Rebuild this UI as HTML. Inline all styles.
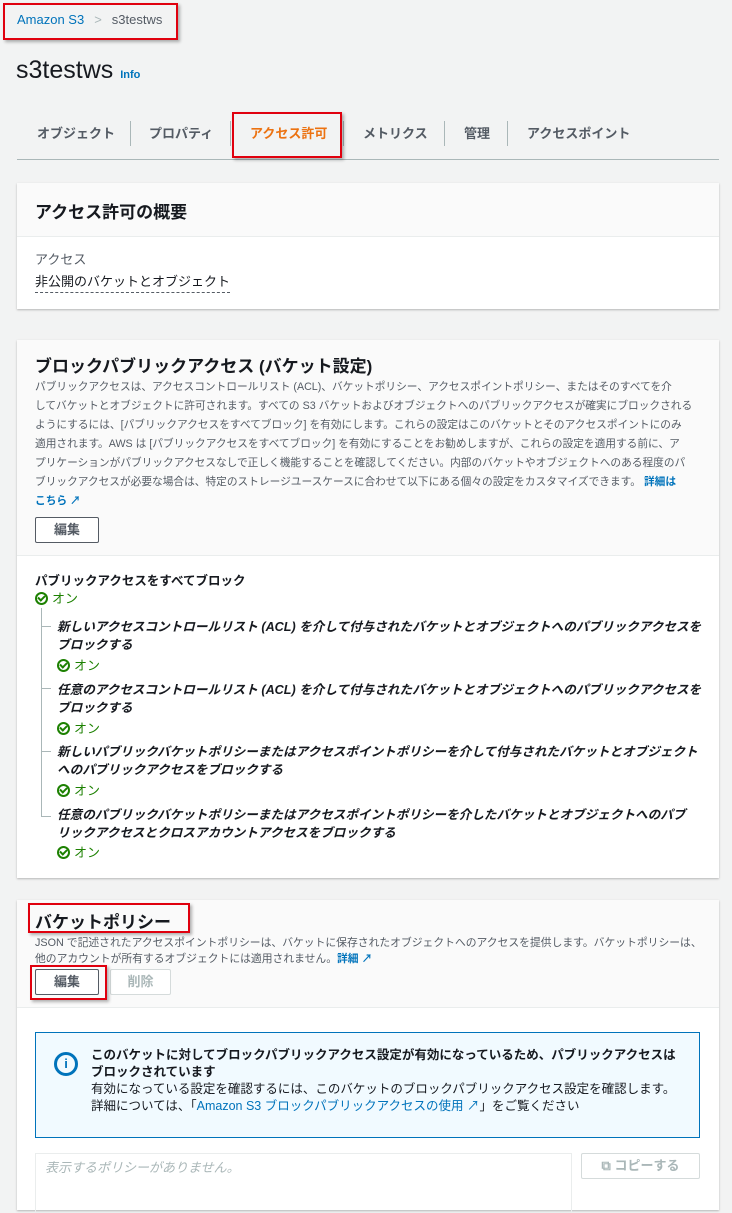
<!DOCTYPE html>
<html><head><meta charset="utf-8"><style>
*{box-sizing:border-box;margin:0;padding:0}
body{width:732px;height:1202px;overflow:hidden;background:#f2f3f3;font-family:"Liberation Sans","Noto Sans CJK JP",sans-serif;color:#16191f;position:relative;font-size:13px}
.a{position:absolute;white-space:nowrap}
.red{position:absolute;border:2px solid #e0000e;box-shadow:2px 2px 3px rgba(0,0,0,.3)}
.card{position:absolute;left:17px;width:702px;background:#fff;box-shadow:0 1px 2px rgba(0,0,0,.25)}
.hd{background:#fafafa;border-bottom:1px solid #eaeded}
.link{color:#0073bb}
.btn{position:absolute;border:1px solid #545b64;border-radius:2px;background:#fff;font-weight:bold;font-size:13px;text-align:center;color:#545b64}
.ok{color:#1d8102}
.ck{display:inline-block;width:13px;height:13px;border:2px solid #1d8102;border-radius:50%;vertical-align:-2px;margin-right:4px;position:relative}
.ck:after{content:"";position:absolute;left:2px;top:0px;width:3px;height:5px;border:solid #1d8102;border-width:0 2px 2px 0;transform:rotate(45deg)}
.it{font-weight:bold;font-style:italic;font-size:12.6px;line-height:18px}
.tab{position:absolute;top:123px;font-weight:bold;font-size:13px;color:#545b64}
.sep{position:absolute;top:121px;width:1px;height:25px;background:#aab7b8}
.desc{font-size:10.7px;line-height:19px;color:#545b64}
</style></head><body>
<div class="a" style="left:17px;top:12px;font-size:13px"><span class="link">Amazon S3</span><span style="color:#aab7b8;margin:0 10px">&gt;</span><span style="color:#545b64">s3testws</span></div>
<div class="red" style="left:3px;top:3px;width:175px;height:37px"></div>
<div class="a" style="left:16px;top:56px;font-size:25px">s3testws <span class="link" style="font-size:11px;font-weight:bold">Info</span></div>
<div class="tab" style="left:37px">オブジェクト</div>
<div class="sep" style="left:130px"></div>
<div class="tab" style="left:149px">プロパティ</div>
<div class="sep" style="left:230px"></div>
<div class="tab" style="left:250px;color:#ec7211">アクセス許可</div>
<div class="sep" style="left:343px"></div>
<div class="tab" style="left:363px">メトリクス</div>
<div class="sep" style="left:444px"></div>
<div class="tab" style="left:464px">管理</div>
<div class="sep" style="left:507px"></div>
<div class="tab" style="left:527px">アクセスポイント</div>
<div class="a" style="left:17px;top:159px;width:702px;height:1px;background:#aab7b8"></div>
<div class="red" style="left:232px;top:112px;width:110px;height:46px"></div>

<div class="card" style="top:183px;height:126px">
<div class="hd" style="height:54px;padding:15px 18px;font-size:17px;font-weight:bold">アクセス許可の概要</div>
<div class="a" style="left:18px;top:66px;color:#545b64">アクセス</div>
<div class="a" style="left:18px;top:88px;border-bottom:1px dashed #545b64;padding-bottom:2px">非公開のバケットとオブジェクト</div>
</div>

<div class="card" style="top:340px;height:538px">
<div class="hd" style="height:216px;padding:16px 18px">
<div style="font-size:17px;font-weight:bold;line-height:22px">ブロックパブリックアクセス (バケット設定)</div>
<div class="desc" style="white-space:nowrap">パブリックアクセスは、アクセスコントロールリスト (ACL)、バケットポリシー、アクセスポイントポリシー、またはそのすべてを介<br>してバケットとオブジェクトに許可されます。すべての S3 バケットおよびオブジェクトへのパブリックアクセスが確実にブロックされる<br>ようにするには、[パブリックアクセスをすべてブロック] を有効にします。これらの設定はこのバケットとそのアクセスポイントにのみ<br>適用されます。AWS は [パブリックアクセスをすべてブロック] を有効にすることをお勧めしますが、これらの設定を適用する前に、ア<br>プリケーションがパブリックアクセスなしで正しく機能することを確認してください。内部のバケットやオブジェクトへのある程度のパ<br>ブリックアクセスが必要な場合は、特定のストレージユースケースに合わせて以下にある個々の設定をカスタマイズできます。 <b class="link">詳細は</b><br><b class="link">こちら ↗</b></div>
</div>
<div class="btn" style="left:18px;top:177px;width:64px;height:26px;line-height:24px">編集</div>
<div class="a" style="left:18px;top:230px;font-weight:bold;font-size:12.5px">パブリックアクセスをすべてブロック</div>
<div class="a ok" style="left:18px;top:248px"><span class="ck"></span>オン</div>
<div class="a" style="left:24px;top:268px;width:1px;height:208px;background:#aab7b8"></div>
<div class="a" style="left:24px;top:286px;width:10px;height:1px;background:#aab7b8"></div>
<div class="a" style="left:24px;top:348px;width:10px;height:1px;background:#aab7b8"></div>
<div class="a" style="left:24px;top:411px;width:10px;height:1px;background:#aab7b8"></div>
<div class="a" style="left:24px;top:476px;width:10px;height:1px;background:#aab7b8"></div>
<div class="a it" style="left:40px;top:278px">新しいアクセスコントロールリスト (ACL) を介して付与されたバケットとオブジェクトへのパブリックアクセスを<br>ブロックする</div>
<div class="a ok" style="left:40px;top:315px"><span class="ck"></span>オン</div>
<div class="a it" style="left:40px;top:341px">任意のアクセスコントロールリスト (ACL) を介して付与されたバケットとオブジェクトへのパブリックアクセスを<br>ブロックする</div>
<div class="a ok" style="left:40px;top:378px"><span class="ck"></span>オン</div>
<div class="a it" style="left:40px;top:403px">新しいパブリックバケットポリシーまたはアクセスポイントポリシーを介して付与されたバケットとオブジェクト<br>へのパブリックアクセスをブロックする</div>
<div class="a ok" style="left:40px;top:440px"><span class="ck"></span>オン</div>
<div class="a it" style="left:40px;top:466px">任意のパブリックバケットポリシーまたはアクセスポイントポリシーを介したバケットとオブジェクトへのパブ<br>リックアクセスとクロスアカウントアクセスをブロックする</div>
<div class="a ok" style="left:40px;top:502px"><span class="ck"></span>オン</div>
</div>

<div class="card" style="top:900px;height:310px">
<div class="hd" style="height:108px"></div>
<div class="a" style="left:18px;top:8px;font-size:17px;font-weight:bold">バケットポリシー</div>
<div class="a desc" style="left:18px;top:35px;line-height:16px;font-size:10.8px">JSON で記述されたアクセスポイントポリシーは、バケットに保存されたオブジェクトへのアクセスを提供します。バケットポリシーは、<br>他のアカウントが所有するオブジェクトには適用されません。<b class="link">詳細 ↗</b></div>
<div class="btn" style="left:18px;top:69px;width:64px;height:26px;line-height:24px">編集</div>
<div class="btn" style="left:93px;top:69px;width:61px;height:26px;line-height:24px;color:#aab7b8;border-color:#d5dbdb">削除</div>
<div class="a" style="left:18px;top:132px;width:665px;height:106px;border:1px solid #0073bb;background:#f1faff"></div>
<div class="a" style="left:37px;top:152px;width:24px;height:24px;border:3px solid #0073bb;border-radius:50%;color:#0073bb;font-weight:bold;font-size:13px;text-align:center;line-height:18px">i</div>
<div class="a" style="left:74px;top:147px;line-height:17px;font-size:12.5px"><b>このバケットに対してブロックパブリックアクセス設定が有効になっているため、パブリックアクセスは<br>ブロックされています</b><br>有効になっている設定を確認するには、このバケットのブロックパブリックアクセス設定を確認します。<br>詳細については、「<span class="link">Amazon S3 ブロックパブリックアクセスの使用 ↗</span>」をご覧ください</div>
<div class="a" style="left:18px;top:253px;width:537px;height:60px;border:1px solid #eaeded"></div>
<div class="a" style="left:28px;top:257px;font-style:italic;color:#aab7b8">表示するポリシーがありません。</div>
<div class="btn" style="left:564px;top:253px;width:119px;height:26px;line-height:24px;color:#aab7b8;border-color:#d5dbdb;font-weight:bold">⧉ コピーする</div>
</div>
<div class="red" style="left:28px;top:903px;width:162px;height:30px"></div>
<div class="red" style="left:30px;top:965px;width:77px;height:35px"></div>
</body></html>
